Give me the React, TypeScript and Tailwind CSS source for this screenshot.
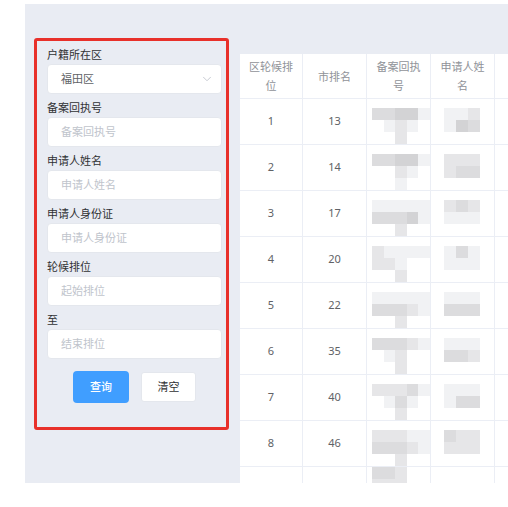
import React from 'react';
import { ChevronDown } from 'lucide-react';

const font = { fontFamily: '"Noto Sans", "Noto Sans CJK SC", sans-serif' };

const shade: Record<string, string> = {
  '0': 'bg-transparent',
  '1': 'bg-[#d3d3d5]',
  '2': 'bg-[#dcdcde]',
  '3': 'bg-[#e6e6e8]',
  '4': 'bg-[#f1f2f4]',
};

const rows = [
  { a: '1', b: '13', c: ['22114', '04340', '00300'], d: ['443', '412'] },
  { a: '2', b: '14', c: ['22114', '00340', '00400'], d: ['333', '322'] },
  { a: '3', b: '17', c: ['44444', '22214', '00300'], d: ['323', '444'] },
  { a: '4', b: '20', c: ['34444', '33400', '00300'], d: ['424', '444'] },
  { a: '5', b: '22', c: ['44444', '22234', '00300'], d: ['444', '222'] },
  { a: '6', b: '35', c: ['22234', '04300', '00300'], d: ['444', '223'] },
  { a: '7', b: '40', c: ['33324', '04240', '00300'], d: ['444', '422'] },
  { a: '8', b: '46', c: ['33344', '22234', '00300'], d: ['233', '333'] },
];

const Pixels = ({ pattern }: { pattern: string[] }) => (
  <div className="flex flex-col">
    {pattern.map((line, i) => (
      <div key={i} className="flex">
        {line.split('').map((ch, j) => (
          <div key={j} className={`w-[12px] h-[12px] ${shade[ch]}`} />
        ))}
      </div>
    ))}
  </div>
);

const Field = ({ label, placeholder, value, select }: { label: string; placeholder?: string; value?: string; select?: boolean }) => (
  <div className="flex flex-col">
    <div className="h-[23px] pt-[5px] leading-[17px] text-[11px] text-[#303133]">{label}</div>
    <div className="h-[30px] w-[175px] bg-white border border-[#e4e7ed] rounded-[4px] flex items-center pl-[13px] pr-[7px]">
      <span className={`flex-1 text-[11px] ${value ? 'text-[#606266]' : 'text-[#c0c4cc]'}`}>{value ?? placeholder}</span>
      {select && <ChevronDown size={14} strokeWidth={1.5} className="text-[#c0c4cc]" />}
    </div>
  </div>
);

export default function App() {
  return (
    <div className="w-[508px] h-[507px] bg-white pt-[4px] pl-[25px] overflow-hidden" style={font}>
      <div className="h-[479px] bg-[#e9ecf3] flex overflow-hidden">
        <div className="w-[215px] shrink-0 pl-[9px] pt-[34px]">
          <div className="w-[195px] h-[392px] border-[3px] border-[#e8302a] rounded-[3px] pl-[10px]">
            <Field label="户籍所在区" value="福田区" select />
            <Field label="备案回执号" placeholder="备案回执号" />
            <Field label="申请人姓名" placeholder="申请人姓名" />
            <Field label="申请人身份证" placeholder="申请人身份证" />
            <Field label="轮候排位" placeholder="起始排位" />
            <Field label="至" placeholder="结束排位" />
            <div className="w-[175px] flex justify-center gap-[12px] mt-[12px]">
              <button className="w-[56px] h-[32px] rounded-[4px] bg-[#409eff] text-white text-[11px] font-medium">查询</button>
              <button className="w-[55px] h-[30px] mt-[1px] rounded-[3px] bg-white border border-[#e4e7ed] text-[#303133] text-[11px]">清空</button>
            </div>
          </div>
        </div>
        <div className="flex-1 pt-[50px] overflow-hidden">
          <div className="bg-white w-[300px] h-full">
            <div className="flex h-[45px] border-b border-[#ebeef5] text-[11px] leading-[19px] text-[#909399] text-center">
              <div className="w-[63px] border-r border-[#ebeef5] flex items-center justify-center">区轮候排<br />位</div>
              <div className="w-[64px] border-r border-[#ebeef5] flex items-center justify-center">市排名</div>
              <div className="w-[64px] border-r border-[#ebeef5] flex items-center justify-center">备案回执<br />号</div>
              <div className="w-[64px] border-r border-[#ebeef5] flex items-center justify-center">申请人姓<br />名</div>
              <div className="flex-1" />
            </div>
            {rows.map((r) => (
              <div key={r.a} className="flex h-[46px] border-b border-[#ebeef5] text-[11px] text-[#606266]">
                <div className="w-[63px] border-r border-[#ebeef5] flex items-center justify-center">{r.a}</div>
                <div className="w-[64px] border-r border-[#ebeef5] flex items-center justify-center">{r.b}</div>
                <div className="w-[64px] border-r border-[#ebeef5] pl-[5px] pt-[9px]">
                  <Pixels pattern={r.c} />
                </div>
                <div className="w-[64px] border-r border-[#ebeef5] pl-[13px] pt-[9px]">
                  <Pixels pattern={r.d} />
                </div>
                <div className="flex-1" />
              </div>
            ))}
            <div className="flex h-[46px] text-[11px]">
              <div className="w-[63px] border-r border-[#ebeef5]" />
              <div className="w-[64px] border-r border-[#ebeef5]" />
              <div className="w-[64px] border-r border-[#ebeef5] pl-[5px]">
                <Pixels pattern={['22300', '33300']} />
              </div>
              <div className="w-[64px] border-r border-[#ebeef5]" />
              <div className="flex-1" />
            </div>
          </div>
        </div>
      </div>
    </div>
  );
}
